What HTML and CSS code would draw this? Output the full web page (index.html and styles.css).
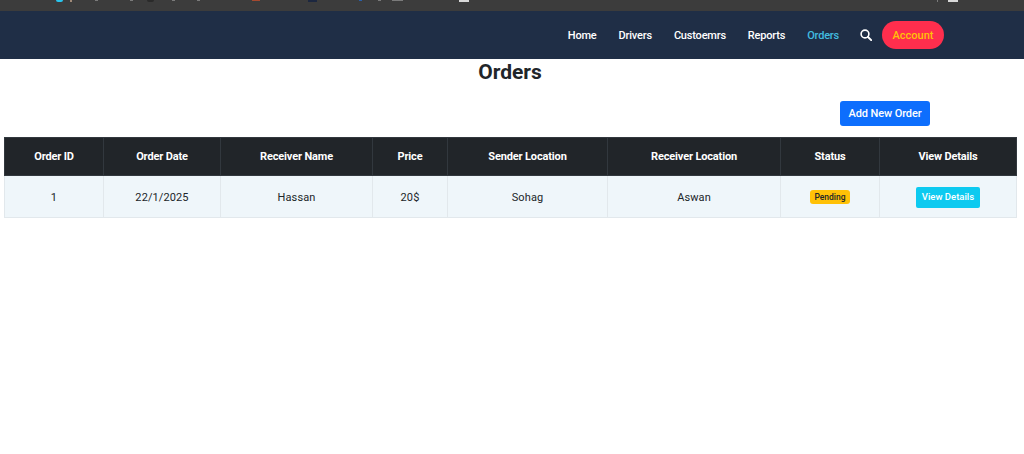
FILE: index.html
```html
<!DOCTYPE html>
<html lang="en">
<head>
<meta charset="utf-8">
<title>Orders</title>
<link rel="stylesheet" href="styles.css">
</head>
<body>
<div class="chrome">
  <span class="blip blip-cyan"></span>
  <span class="blip blip-tan"></span>
  <span class="blip blip-grey b1"></span>
  <span class="blip blip-grey b2"></span>
  <span class="blip blip-dark"></span>
  <span class="blip blip-grey b3"></span>
  <span class="blip blip-grey b4"></span>
  <span class="blip blip-red"></span>
  <span class="blip blip-navy"></span>
  <span class="blip blip-grey b5"></span>
  <span class="blip blip-grey b6"></span>
  <span class="blip blip-grey b7"></span>
  <span class="blip blip-white"></span>
  <span class="blip blip-white b8"></span>
  <span class="blip blip-grey b9"></span>
</div>
<nav class="navbar">
  <a class="nav-link" href="#">Home</a>
  <a class="nav-link" href="#">Drivers</a>
  <a class="nav-link" href="#">Custoemrs</a>
  <a class="nav-link" href="#">Reports</a>
  <a class="nav-link active" href="#">Orders</a>
  <svg class="search" viewBox="0 0 12 12" width="12" height="12" aria-hidden="true"><circle cx="5" cy="5" r="3.9" fill="none" stroke="#fff" stroke-width="1.6"/><path d="M8 8l3.2 3.2" stroke="#fff" stroke-width="1.9" stroke-linecap="round"/></svg>
  <a class="account" href="#">Account</a>
</nav>
<main>
  <h1 class="title">Orders</h1>
  <div class="actions"><a class="btn-add" href="#">Add New Order</a></div>
  <table class="orders">
    <colgroup>
      <col class="c1"><col class="c2"><col class="c3"><col class="c4"><col class="c5"><col class="c6"><col class="c7"><col class="c8">
    </colgroup>
    <thead>
      <tr><th>Order ID</th><th>Order Date</th><th>Receiver Name</th><th>Price</th><th>Sender Location</th><th>Receiver Location</th><th>Status</th><th>View Details</th></tr>
    </thead>
    <tbody>
      <tr><td>1</td><td>22/1/2025</td><td>Hassan</td><td>20$</td><td>Sohag</td><td>Aswan</td><td><span class="badge">Pending</span></td><td><a class="btn-view" href="#">View Details</a></td></tr>
    </tbody>
  </table>
</main>
</body>
</html>
```
FILE: styles.css
```css
* { box-sizing: border-box; }
html, body { margin: 0; padding: 0; background: #fff; }
body { font-family: Roboto, "Liberation Sans", sans-serif; color: #212529; height: 454px; overflow: hidden; }
a { text-decoration: none; }
.chrome { height: 11px; background: #3c3c3c; position: relative; }
.blip { position: absolute; top: 0; height: 2px; }
.blip-cyan { left: 56px; width: 7px; height: 2px; background: #29c5ee; border-radius: 0 0 4px 4px; }
.blip-tan { left: 70px; width: 2px; background: #a08a78; }
.blip-dark { left: 147px; width: 7px; background: #2a2a2a; border-radius: 0 0 4px 4px; }
.blip-red { left: 252px; width: 8px; height: 1px; background: #a5492f; }
.blip-navy { left: 308px; width: 9px; background: #1c2740; }
.blip-white { left: 459px; width: 10px; height: 2px; background: #d8d8d8; }
.blip-grey { width: 3px; height: 1px; background: #7a7a7a; }
.b1 { left: 95px; } .b2 { left: 130px; } .b3 { left: 172px; } .b4 { left: 197px; }
.b5 { left: 359px; background: #2a5fa8; } .b6 { left: 378px; } .b7 { left: 392px; width: 11px; }
.b8 { left: 948px; width: 10px; } .b9 { left: 937px; width: 1px; height: 2px; }
.navbar { height: 48px; background: #1f2e46; display: flex; align-items: center; justify-content: flex-end; padding-right: 80px; font-size: 11px; font-weight: 500; }
.nav-link { color: #fff; margin-right: 22px; letter-spacing: -.2px; }
.nav-link.active { color: #42bde0; margin-right: 21px; }
.search { margin-right: 10px; }
.account { background: #ff2e4d; color: #ffc107; border-radius: 14px; height: 28px; width: 62px; display: flex; align-items: center; justify-content: center; }
.title { margin: 0; height: 41px; text-align: center; font-size: 21px; line-height: 26px; font-weight: 700; color: #212529; padding-right: 4px; }
.actions { display: flex; justify-content: flex-end; padding-right: 94px; height: 37px; }
.btn-add { background: #0d6efd; color: #fff; font-size: 11px; font-weight: 500; letter-spacing: -.1px; height: 25px; width: 90px; margin-top: 1px; border-radius: 3px; display: flex; align-items: center; justify-content: center; }
.orders { border-collapse: collapse; table-layout: fixed; width: 1012px; margin-left: 4px; font-size: 11px; text-align: center; }
.c1 { width: 99px; } .c2 { width: 117px; } .c3 { width: 152px; } .c4 { width: 75px; }
.c5 { width: 160px; } .c6 { width: 173px; } .c7 { width: 99px; } .c8 { width: 137px; }
.orders th { background: #212529; color: #fff; height: 38px; font-weight: 700; font-size: 11px; letter-spacing: -.15px; border: 1px solid #32383e; padding: 0; }
.orders td { background: #eff6fa; height: 42px; font-weight: 400; letter-spacing: .1px; color: #212529; border: 1px solid #e2e8ec; padding: 1px 0 0; }
.badge { display: inline-block; background: #ffc107; color: #212529; font-size: 8.5px; font-weight: 500; letter-spacing: 0; width: 40px; height: 14px; line-height: 14px; border-radius: 3px; }
.btn-view { display: inline-block; background: #0dcaf0; color: #fff; font-size: 9.5px; font-weight: 500; letter-spacing: 0; width: 64px; height: 21px; line-height: 20px; border-radius: 2px; }
```
